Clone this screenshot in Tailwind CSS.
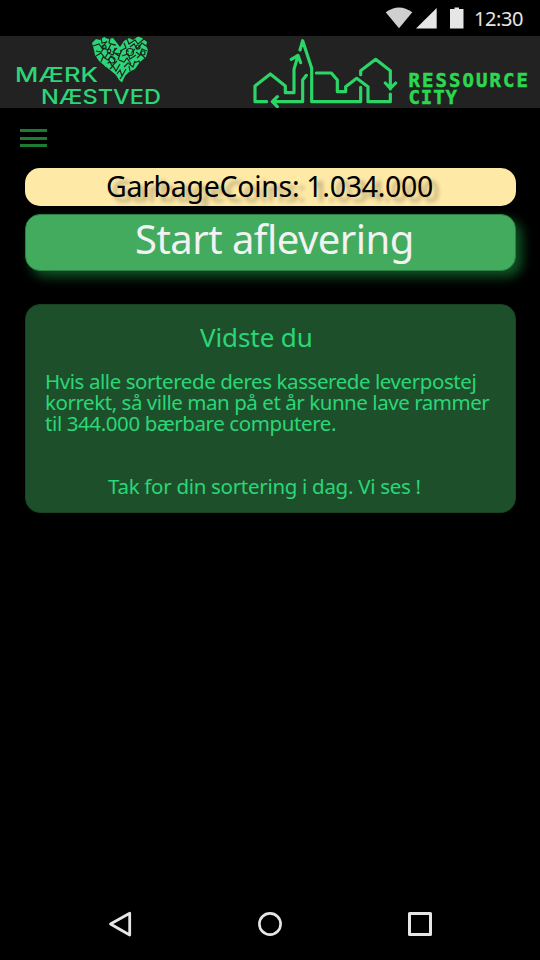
<!DOCTYPE html>
<html lang="da">
<head>
<meta charset="utf-8">
<title>GarbageCoins</title>
<script src="https://cdn.jsdelivr.net/npm/@tailwindcss/browser@4"></script>
</head>
<body class="bg-black">
<div class="w-[540px] h-[960px] overflow-hidden bg-black flex flex-col font-['Noto_Sans','Open_Sans',sans-serif]">
  <div class="h-9 shrink-0 flex items-center justify-end pr-[17px]">
    <svg class="w-20 h-9" viewBox="385 0 80 36">
      <path d="M385.700 12.300Q399 2.500 412.300 12.300L399 28.300Z" fill="#cfcfcf"/>
      <path d="M436.700 8V28.500H416Z" fill="#e6e6e6"/>
      <path d="M450 9h4.500V7.500h4.500V9h4.500v19.500H450Z" fill="#e6e6e6"/>
    </svg>
    <span class="ml-[9px] pt-px text-[20px] leading-9 tracking-[-0.4px] text-[#e6e6e6]">12:30</span>
  </div>
  <header class="h-[72px] shrink-0 bg-[#222222] flex">
    <svg class="w-60 h-[72px]" viewBox="0 36 240 72">
      <text x="15" y="82" textLength="83" lengthAdjust="spacingAndGlyphs" class="font-[Inter] font-medium text-[19.500px] fill-[#2bd678]">MÆRK</text>
      <text x="41" y="104" textLength="120" lengthAdjust="spacingAndGlyphs" class="font-[Inter] font-medium text-[19.500px] fill-[#2bd678]">NÆSTVED</text>
      <path d="M92 43L96 39L100 40L104 37L108 39L113 38L117 43L120 47L124 41L129 38L133 40L138 36.500L142 38L147 42L146 46L148 50L146 57L140 62L135 69L129 72L125 76L122 82.500L119 80L116 75L110 70L105 66L99 61L95 55L94 50Z" fill="#2bd678"/>
      <g fill="none" stroke="#222" stroke-width="1.200">
        <path d="M93 46l6-2 3 4 5-7M96 51l5 1 3-4 4 2 3-6 5 1M96 56l5-3 4 5 3-5 5 2 2-7M101 62l2-5 5 3 3-4 4 4M106 64l4-2 2 4 5-5M110 69l3-3 3 5 4-7M117 74l3-4 2 6 4-7M120 79l2-3M101 38l1 5 5-1M110 38l-1 5 5 2M117 48l-4 4 6 4 3-6M120 51l6-3-2-5M122 56l6-2 2 5 6-4M119 60l5 2 3-4 4 6M124 67l4-4 5 4 2-6M130 71l-1-5M127 39l2 5 6-4 3 4 6-5M130 47l4-3 3 5 5-6 4 3M136 52l4 3 2-6 5 2M137 58l4-4 4 4M134 63l5-2 1 3M126 50l5 3 4-4M114 53l6 1-2 6"/>
        <circle cx="104" cy="47" r="2"/><circle cx="112" cy="60" r="3"/><circle cx="130" cy="52" r="3.500"/><circle cx="143" cy="53" r="2"/><circle cx="109" cy="51" r="1.800"/><circle cx="138" cy="47" r="2"/>
      </g>
      <g fill="#2bd678"><circle cx="106.500" cy="65" r="1.900"/><circle cx="112" cy="60" r="1.200"/><circle cx="130" cy="52" r="1.600"/></g>
    </svg>
    <svg class="w-40 h-[72px]" viewBox="0 18 480 216" fill="none" stroke="#2bd566" stroke-width="9.500" stroke-linecap="round" stroke-linejoin="round">
      <path d="M80 215H45V168L91 132L136 168V188H162V118L173 80M154 88L174 76L182 98M180 60L188 32L215 115V215H362V172M199 136L188 150V215H97M112 200L97 215L112 230M229 129H274L292 150V185H317V170L350 145L384 170V215H451V192M362 134V122L407 88L451 122V177M436 159L451 175L467 159"/>
    </svg>
    <svg class="w-[140px] h-[72px]" viewBox="400 36 140 72">
      <g fill="#2bd84f" stroke="#2bd84f" stroke-width="0.500">
        <text x="408.500" y="87" textLength="119.500" lengthAdjust="spacing" class="font-['DejaVu_Sans_Mono'] font-bold text-[19px]">RESSOURCE</text>
        <text x="408.500" y="104" textLength="48.500" lengthAdjust="spacing" class="font-['DejaVu_Sans_Mono'] font-bold text-[19px]">CITY</text>
      </g>
    </svg>
  </header>
  <main class="flex-1 px-[25px] pt-[21px] flex flex-col">
    <button class="ml-[-5px] w-[27px] h-[18px] flex flex-col justify-between" aria-label="Menu">
      <span class="h-[3px] w-full bg-[#1b7c33]"></span><span class="h-[3px] w-full bg-[#1b7c33]"></span><span class="h-[3px] w-full bg-[#1b7c33]"></span>
    </button>
    <div class="mt-[21px] w-[491px] h-[38px] rounded-[15px] bg-[#ffe9a6] pl-[81px] whitespace-nowrap text-[28.500px] leading-[37px] tracking-[-0.3px] text-black [text-shadow:6px_5px_4px_rgba(0,0,0,0.3)]">GarbageCoins: 1.034.000</div>
    <button class="mt-2 w-[491px] h-[57px] rounded-[15px] bg-[#43ab5d] border border-[#2d8044] pl-[109px] pb-[7px] text-left whitespace-nowrap text-[40px] leading-[48px] tracking-[-0.55px] text-[#f2f2f2] shadow-[6px_6px_12px_#0f5424]">Start aflevering</button>
    <section class="mt-[33px] w-[491px] h-[209px] rounded-[15px] bg-[#1d502a] border border-[#174322] text-[#2bd678] px-[19px] pt-4 whitespace-nowrap">
      <h2 class="pl-[155px] text-[26px] leading-8 tracking-[-0.1px]">Vidste du</h2>
      <div class="mt-[18px] text-[20.500px] leading-[21px]">
        <p class="tracking-[-0.43px]">Hvis alle sorterede deres kasserede leverpostej</p>
        <p class="tracking-[-0.45px]">korrekt, så ville man på et år kunne lave rammer</p>
        <p class="tracking-[-0.4px]">til 344.000 bærbare computere.</p>
        <p class="mt-[42px] pl-[63px] tracking-[-0.3px]">Tak for din sortering i dag. Vi ses !</p>
      </div>
    </section>
  </main>
  <nav class="h-[72px] shrink-0 flex justify-center gap-[126px] items-center text-[#e6e6e6]">
    <svg class="size-6 overflow-visible" viewBox="108 912 24 24" fill="none" stroke="currentColor" stroke-width="2.800" stroke-linejoin="round"><path d="M129.700 913.200V935L110.500 924Z"/></svg>
    <svg class="size-6" viewBox="0 0 24 24" fill="none" stroke="currentColor" stroke-width="2.600"><circle cx="12" cy="12" r="10.600"/></svg>
    <svg class="size-6" viewBox="0 0 24 24" fill="none" stroke="currentColor" stroke-width="3" stroke-linejoin="round"><path d="M1.500 1.500h21v21h-21z"/></svg>
  </nav>
</div>
</body>
</html>
